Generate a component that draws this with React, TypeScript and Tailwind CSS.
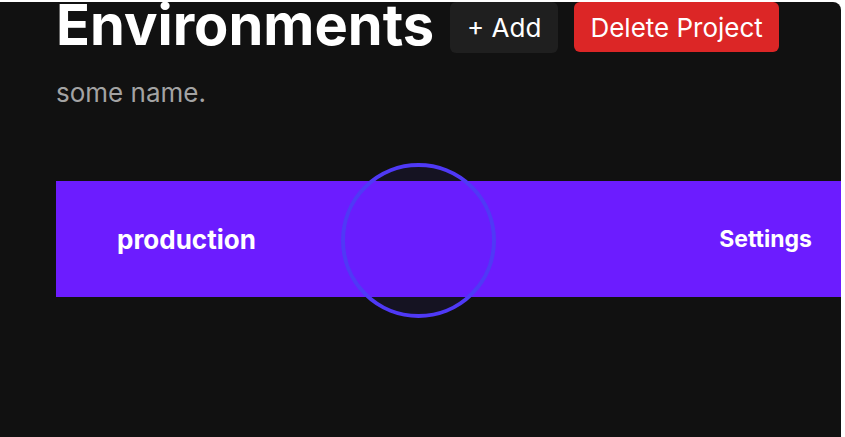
import React from 'react';

export default function App() {
  return (
    <div className="h-screen w-full bg-white pt-[2px] pr-[4px]" style={{ fontFamily: 'Inter, "Noto Sans", sans-serif' }}>
      <div className="relative h-full overflow-hidden rounded-tr-lg bg-[#111111] pl-14">
        {/* Header */}
        <div className="flex items-start gap-4">
          <h1 className="-mt-[5px] text-[56px] font-bold leading-none text-white">Environments</h1>
          <button className="h-[51px] rounded-md bg-[#1f1f1f] px-[17px] text-[26px] text-white">+ Add</button>
          <button className="h-[50px] rounded-md bg-[#dc2626] px-4 text-[26px] text-white">Delete Project</button>
        </div>
        <p className="mt-[27px] text-[26px] leading-none text-[#a3a3a3]">some name.</p>

        {/* Environment list */}
        <div className="mt-[75px] flex h-[116px] items-center justify-between bg-[#6c1cff] pl-[61px] pr-[29px]">
          <span className="text-[26px] font-bold text-white">production</span>
          <span className="text-[23px] font-bold text-white">Settings</span>
        </div>

        {/* Cursor highlight */}
        <div className="absolute left-[341px] top-[161px] h-[155px] w-[155px] rounded-full border-4 border-[#4f39f6] bg-[#4f39f6]/[0.08]" />
      </div>
    </div>
  );
}
